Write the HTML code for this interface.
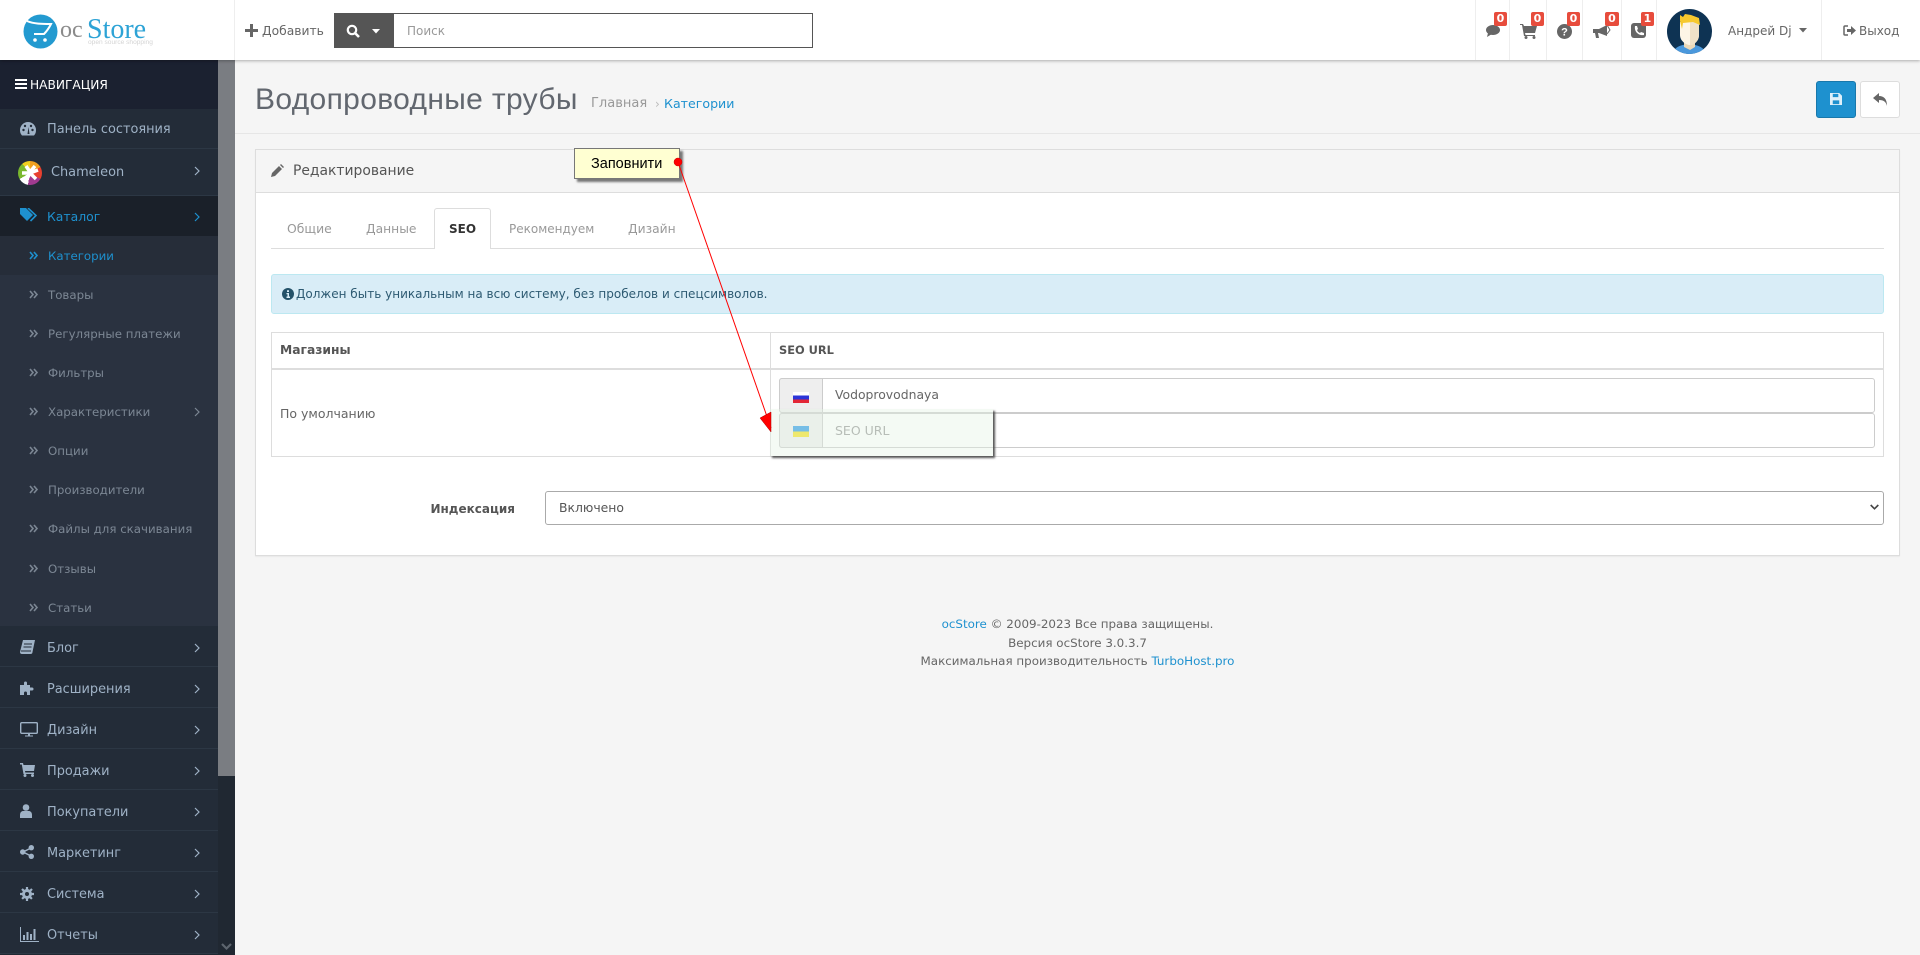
<!DOCTYPE html>
<html lang="ru"><head><meta charset="utf-8"><title>Водопроводные трубы</title>
<style>
html,body{margin:0;padding:0;width:1920px;height:955px;overflow:hidden;background:#f5f5f5;font-family:"DejaVu Sans","Liberation Sans",sans-serif;color:#666}
.a,.t,svg.i{position:absolute}
.a{box-sizing:border-box}
.t{white-space:nowrap;line-height:20px;font-size:12px}
.m{font-size:12.9px;color:#9fb2c6;left:47px}
.s{font-size:11.8px;color:#7c8794;left:48px}
.r{position:absolute;left:0;width:218px;height:41px;border-bottom:1px solid #2c3744;background:#232c38;box-sizing:border-box}
.b{position:absolute;top:12px;height:14px;background:#e74c3c;color:#fff;font-size:11px;font-weight:bold;line-height:14px;text-align:center;border-radius:2px}
.v{position:absolute;top:0;width:1px;height:60px;background:#eee}
</style></head><body>

<!-- header -->
<div class="a" style="left:0;top:0;width:1920px;height:60px;background:#fff;box-shadow:0 1px 3px rgba(0,0,0,.3);z-index:5">
 <svg class="i" style="left:22px;top:13px" width="38" height="37" viewBox="0 0 38 37"><circle cx="18.5" cy="18.5" r="17" fill="#239ad0"/><path d="M5 8c7 3 15 3 24 3-2 4-4 7-7 10H12" fill="none" stroke="#fff" stroke-width="2"/><circle cx="13" cy="27" r="1.8" fill="#fff"/><circle cx="23" cy="27" r="1.8" fill="#fff"/></svg>
 <span class="t" style="left:60px;top:17px;font:24px/26px 'Liberation Serif',serif;color:#8b8b8b">oc</span>
 <span class="t" style="left:87px;top:14px;font:28px/32px 'Liberation Serif',serif;color:#2da3d6">Store</span>
 <span class="t" style="left:88px;top:37px;font:6.6px/12px 'Liberation Sans',sans-serif;color:#d4d4d4">open source shopping</span>
 <div class="v" style="left:234px"></div>
 <svg class="i" style="left:245px;top:24px" width="13" height="13" viewBox="0 0 13 13"><path d="M5 0h3v5h5v3H8v5H5V8H0V5h5z" fill="#666"/></svg>
 <span class="t" style="left:262px;top:21px;font-size:12.3px">Добавить</span>
 <div class="a" style="left:334px;top:13px;width:60px;height:35px;background:#555"></div>
 <svg class="i" style="left:346px;top:24px" width="14" height="14" viewBox="0 0 14 14"><circle cx="6" cy="6" r="4.2" fill="none" stroke="#fff" stroke-width="2.2"/><path d="M9 9l4 4" stroke="#fff" stroke-width="2.6"/></svg>
 <svg class="i" style="left:372px;top:29px" width="9" height="5" viewBox="0 0 9 5"><path d="M0 0h8L4 4.5z" fill="#fff"/></svg>
 <div class="a" style="left:393px;top:13px;width:420px;height:35px;border:1px solid #555;background:#fff"></div>
 <span class="t" style="left:407px;top:21px;font-size:12px;color:#999">Поиск</span>

 <div class="v" style="left:1475px"></div><div class="v" style="left:1509px"></div><div class="v" style="left:1546px"></div><div class="v" style="left:1582px"></div><div class="v" style="left:1621px"></div><div class="v" style="left:1656px"></div><div class="v" style="left:1821px"></div>
 <svg class="i" style="left:1486px;top:25px" width="14" height="12" viewBox="0 0 14 12"><ellipse cx="7" cy="5" rx="7" ry="5" fill="#666"/><path d="M2 8L1 12l5-3z" fill="#666"/></svg>
 <svg class="i" style="left:1520px;top:24px" width="17" height="15" viewBox="0 0 17 15"><path d="M0 0h3l1 2h13l-2 7H5l.5 2H15v1H4L2 1H0z" fill="#666"/><circle cx="6" cy="13.5" r="1.5" fill="#666"/><circle cx="14" cy="13.5" r="1.5" fill="#666"/></svg>
 <svg class="i" style="left:1557px;top:24px" width="15" height="15" viewBox="0 0 15 15"><circle cx="7.5" cy="7.5" r="7.5" fill="#666"/><text x="7.5" y="11.5" text-anchor="middle" font-family="Liberation Sans" font-weight="bold" font-size="11" fill="#fff">?</text></svg>
 <svg class="i" style="left:1593px;top:24px" width="18" height="15" viewBox="0 0 18 15"><path d="M0 5h6l8-4v11L6 9H5l1 5H3L2 9H0z" fill="#666"/><path d="M14 1l3 5-3 4" fill="none" stroke="#666"/></svg>
 <svg class="i" style="left:1631px;top:23px" width="15" height="15" viewBox="0 0 15 15"><rect width="15" height="15" rx="3" fill="#666"/><path d="M4 3l2 0 1 3-1 1c.5 1.5 1.5 2.5 3 3l1-1 3 1v2c-5 1-10-3-9-9z" fill="#fff"/></svg>
 <div class="b" style="left:1494px;width:13px">0</div><div class="b" style="left:1531px;width:13px">0</div><div class="b" style="left:1567px;width:13px">0</div><div class="b" style="left:1605px;width:14px">0</div><div class="b" style="left:1641px;width:13px">1</div>
 <svg class="i" style="left:1667px;top:9px" width="45" height="45" viewBox="0 0 45 45"><defs><clipPath id="c"><circle cx="22.5" cy="22.5" r="22.5"/></clipPath></defs><g clip-path="url(#c)"><rect width="45" height="45" fill="#0e3353"/><path d="M6 45c1-7 7-9 16-10 9 1 15 3 17 10z" fill="#4a98dc"/><path d="M17 30h11v8l-5 3-6-3z" fill="#ecd9b8"/><path d="M13 13h19v13c0 6-5 10-9 10s-10-4-10-10z" fill="#fdf5e6"/><path d="M23 13h9v13c0 6-5 10-9 10z" fill="#f0e2c8"/><path d="M13 6l3 2 2-3 6 1 8 3 1 7-7-3-10 1-1 6-2-8z" fill="#f6c92e"/></g></svg>
 <span class="t" style="left:1728px;top:21px;font-size:12px">Андрей Dj</span>
 <svg class="i" style="left:1799px;top:28px" width="9" height="5" viewBox="0 0 9 5"><path d="M0 0h8L4 4.5z" fill="#666"/></svg>
 <svg class="i" style="left:1843px;top:25px" width="13" height="11" viewBox="0 0 13 11"><path d="M5 1H2a1 1 0 00-1 1v7a1 1 0 001 1h3" fill="none" stroke="#666" stroke-width="1.5"/><path d="M4 4h4V1l5 4.5L8 10V7H4z" fill="#666"/></svg>
 <span class="t" style="left:1859px;top:21px;font-size:12px">Выход</span>
</div>

<!-- sidebar -->
<div class="a" style="left:0;top:60px;width:235px;height:895px;background:#202832"></div>
<div class="a" style="left:218px;top:60px;width:17px;height:716px;background:#7a7d82"></div>
<svg class="i" style="left:221px;top:943px" width="11" height="8" viewBox="0 0 11 8"><path d="M1 1l4.5 4.5L10 1" fill="none" stroke="#5d656e" stroke-width="2.2"/></svg>
<div class="a" style="left:0;top:60px;width:218px;height:49px;background:#1b2130"></div>
<svg class="i" style="left:15px;top:79px" width="12" height="10" viewBox="0 0 12 10"><path d="M0 0h12v2H0zM0 4h12v2H0zM0 8h12v2H0z" fill="#fff"/></svg>
<span class="t" style="left:30px;top:75px;font-size:12.2px;color:#fff">НАВИГАЦИЯ</span>

<div class="r" style="top:109px;height:40px"></div>
<div class="r" style="top:149px;height:47px"></div>
<div class="r" style="top:196px;height:40px;background:#1a2029;border:0"></div>
<div class="a" style="left:0;top:236px;width:218px;height:39px;background:#262d39"></div>
<div class="a" style="left:0;top:275px;width:218px;height:351px;background:#2a3240"></div>
<div class="r" style="top:626px"></div><div class="r" style="top:667px"></div><div class="r" style="top:708px"></div><div class="r" style="top:749px"></div><div class="r" style="top:790px"></div><div class="r" style="top:831px"></div><div class="r" style="top:872px"></div><div class="r" style="top:913px"></div>

<span class="t m" style="top:120px">Панель состояния</span>
<span class="t m" style="left:51px;top:163px">Chameleon</span>
<span class="t m" style="top:207px;color:#1e91cf;font-size:12.4px">Каталог</span>
<span class="t s" style="top:246px;color:#1e91cf">Категории</span>
<span class="t s" style="top:285px">Товары</span>
<span class="t s" style="top:324px">Регулярные платежи</span>
<span class="t s" style="top:363px">Фильтры</span>
<span class="t s" style="top:402px">Характеристики</span>
<span class="t s" style="top:441px">Опции</span>
<span class="t s" style="top:480px">Производители</span>
<span class="t s" style="top:519px">Файлы для скачивания</span>
<span class="t s" style="top:559px">Отзывы</span>
<span class="t s" style="top:598px">Статьи</span>
<span class="t m" style="top:639px">Блог</span>
<span class="t m" style="top:680px">Расширения</span>
<span class="t m" style="top:721px">Дизайн</span>
<span class="t m" style="top:762px">Продажи</span>
<span class="t m" style="top:803px">Покупатели</span>
<span class="t m" style="top:844px">Маркетинг</span>
<span class="t m" style="top:885px">Система</span>
<span class="t m" style="top:926px">Отчеты</span>

<!-- side icons -->
<svg class="i" style="left:20px;top:122px" width="16" height="14" viewBox="0 0 16 14"><path d="M8 0a8 8 0 00-8 8c0 2 .5 4 2 5.5h12c1.500-1.500 2-3.500 2-5.500a8 8 0 00-8-8z" fill="#9fb2c6"/><circle cx="3.5" cy="8" r="1.2" fill="#232c38"/><circle cx="5" cy="4" r="1.2" fill="#232c38"/><circle cx="11" cy="4" r="1.2" fill="#232c38"/><circle cx="12.5" cy="8" r="1.2" fill="#232c38"/><path d="M7.5 12l1-7 1 7z" fill="#232c38"/></svg>
<div class="a" style="left:18px;top:161px;width:24px;height:24px;border-radius:50%;background:conic-gradient(#f0a020 0 60deg,#e8402f 60deg 120deg,#a03a90 120deg 190deg,#fff 190deg 240deg,#7ab82e 240deg 320deg,#f0d020 320deg)"></div>
<svg class="i" style="left:18px;top:161px" width="24" height="24" viewBox="0 0 24 24"><path d="M8 5l4 6 5-6M8 20l4-8 6 6M4 12l8 0 8-3" fill="none" stroke="#fff" stroke-width="3.5"/></svg>
<svg class="i" style="left:20px;top:208px" width="17" height="14" viewBox="0 0 17 14"><path d="M0 0h6l7 7-6 6-7-7z" fill="#1e91cf"/><path d="M8 0l8 7.5-5.500 5.500" fill="none" stroke="#1e91cf" stroke-width="1.6"/></svg>
<svg class="i" style="left:20px;top:640px" width="15" height="14" viewBox="0 0 15 14"><path d="M3 0h12l-2.500 12a2 2 0 01-2 2H2a2 2 0 01-2-2z" fill="#9fb2c6"/><path d="M4 4h8M3.5 7h8M1 11h10" stroke="#232c38"/></svg>
<svg class="i" style="left:20px;top:680px" width="15" height="15" viewBox="0 0 15 15"><path d="M0 5h4V3a1.500 1.500 0 013 0v2h3v2.500h2a1.500 1.500 0 010 3h-2V15H7v-2a1.500 1.500 0 00-3 0v2H0z" fill="#9fb2c6"/></svg>
<svg class="i" style="left:20px;top:722px" width="18" height="15" viewBox="0 0 18 15"><rect x=".7" y=".7" width="16.6" height="10.6" rx="1" fill="none" stroke="#9fb2c6" stroke-width="1.4"/><path d="M8 12h2v1.500h3v1H5v-1h3z" fill="#9fb2c6"/></svg>
<svg class="i" style="left:20px;top:763px" width="15" height="14" viewBox="0 0 15 14"><path d="M0 0h3l.5 2H15l-1 6H5l.3 1.500H14V11H3.500L1.800 1.500H0z" fill="#9fb2c6"/><circle cx="5" cy="12.5" r="1.5" fill="#9fb2c6"/><circle cx="12.5" cy="12.5" r="1.5" fill="#9fb2c6"/></svg>
<svg class="i" style="left:20px;top:804px" width="12" height="14" viewBox="0 0 12 14"><circle cx="6" cy="3.5" r="3.3" fill="#9fb2c6"/><path d="M0 14v-3c0-3 2-4 3-4h6c1 0 3 1 3 4v3z" fill="#9fb2c6"/></svg>
<svg class="i" style="left:20px;top:845px" width="14" height="14" viewBox="0 0 14 14"><circle cx="2.7" cy="7" r="2.7" fill="#9fb2c6"/><circle cx="11.3" cy="2.7" r="2.7" fill="#9fb2c6"/><circle cx="11.3" cy="11.3" r="2.7" fill="#9fb2c6"/><path d="M3 7l8-4M3 7l8 4" stroke="#9fb2c6" stroke-width="1.5"/></svg>
<svg class="i" style="left:20px;top:887px" width="14" height="14" viewBox="0 0 14 14"><circle cx="7" cy="7" r="3.5" fill="none" stroke="#9fb2c6" stroke-width="3"/><path d="M7 0v14M0 7h14M2 2l10 10M12 2L2 12" stroke="#9fb2c6" stroke-width="2.2" stroke-dasharray="2.5 9"/></svg>
<svg class="i" style="left:20px;top:927px" width="19" height="15" viewBox="0 0 19 15"><path d="M.5 0v14.500H19" fill="none" stroke="#9fb2c6"/><path d="M3 8h2v5H3zM6.500 5h2v8h-2zM10 7h2v6h-2zM13.500 2h2v11h-2z" fill="#9fb2c6"/></svg>
<!-- chevrons -->
<svg class="i" style="left:0;top:0;pointer-events:none" width="218" height="955" viewBox="0 0 218 955"><g fill="none" stroke="#9fb2c6" stroke-width="1.2"><path d="M195 167l4 4-4 4M195 644l4 4-4 4M195 685l4 4-4 4M195 726l4 4-4 4M195 767l4 4-4 4M195 808l4 4-4 4M195 849l4 4-4 4M195 890l4 4-4 4M195 931l4 4-4 4"/><path d="M195 213l4 4-4 4" stroke="#1e91cf"/><path d="M195 408l4 4-4 4" stroke="#7c8794"/></g><g fill="none" stroke="#7c8794" stroke-width="1.6"><path d="M30 291l3 3.500-3 3.500M34 291l3 3.500-3 3.500M30 330l3 3.500-3 3.500M34 330l3 3.500-3 3.500M30 369l3 3.500-3 3.500M34 369l3 3.500-3 3.500M30 408l3 3.500-3 3.500M34 408l3 3.500-3 3.500M30 447l3 3.500-3 3.500M34 447l3 3.500-3 3.500M30 486l3 3.500-3 3.500M34 486l3 3.500-3 3.500M30 525l3 3.500-3 3.500M34 525l3 3.500-3 3.500M30 565l3 3.500-3 3.500M34 565l3 3.500-3 3.500M30 604l3 3.500-3 3.500M34 604l3 3.500-3 3.500"/><path d="M30 252l3 3.500-3 3.500M34 252l3 3.500-3 3.500" stroke="#1e91cf"/></g></svg>

<!-- page head -->
<div class="a" style="left:235px;top:133px;width:1685px;height:1px;background:#e6e6e6"></div>
<span class="t" style="left:255px;top:80px;font:300 30px/40px 'Liberation Sans',sans-serif;color:#62676f;letter-spacing:.34px">Водопроводные трубы</span>
<span class="t" style="left:591px;top:94px;font-size:13px;color:#999">Главная</span>
<span class="t" style="left:655px;top:94px;font-size:12px;color:#bbb">›</span>
<span class="t" style="left:664px;top:94px;font-size:12.6px;color:#1e91cf">Категории</span>
<div class="a" style="left:1816px;top:81px;width:40px;height:37px;background:#1e91cf;border:1px solid #1978ab;border-radius:3px"></div>
<svg class="i" style="left:1830px;top:93px" width="12" height="12" viewBox="0 0 13 13"><path d="M0 0h10l3 3v10H0z" fill="#dff0fa"/><path d="M3 1h6v3.500H3zM3 8h7v4H3z" fill="#1e91cf"/></svg>
<div class="a" style="left:1860px;top:81px;width:40px;height:37px;background:#fff;border:1px solid #ddd;border-radius:3px"></div>
<svg class="i" style="left:1873px;top:93px" width="14" height="13" viewBox="0 0 14 13"><path d="M6 0v3c5 0 8 3 8 10-1-4-3-6-8-6v3L0 5z" fill="#666"/></svg>

<!-- panel -->
<div class="a" style="left:255px;top:149px;width:1645px;height:407px;background:#fff;border:1px solid #ddd;box-shadow:0 1px 1px rgba(0,0,0,.05)"></div>
<div class="a" style="left:256px;top:150px;width:1643px;height:43px;background:#f5f5f5;border-bottom:1px solid #ddd"></div>
<svg class="i" style="left:271px;top:164px" width="13" height="13" viewBox="0 0 13 13"><path d="M0 13l1-4 7-7 3 3-7 7zM9 1l1-1 3 3-1 1z" fill="#666"/></svg>
<span class="t" style="left:293px;top:161px;font-size:13.9px;color:#555">Редактирование</span>

<div class="a" style="left:271px;top:248px;width:1613px;height:1px;background:#ddd"></div>
<div class="a" style="left:434px;top:208px;width:57px;height:41px;background:#fff;border:1px solid #ddd;border-bottom:0;border-radius:3px 3px 0 0"></div>
<span class="t" style="left:287px;top:219px;font-size:12.4px;color:#999">Общие</span>
<span class="t" style="left:366px;top:219px;font-size:12.3px;color:#999">Данные</span>
<span class="t" style="left:449px;top:219px;font-size:12px;color:#333;font-weight:bold">SEO</span>
<span class="t" style="left:509px;top:219px;font-size:12px;color:#999">Рекомендуем</span>
<span class="t" style="left:628px;top:219px;font-size:12.3px;color:#999">Дизайн</span>

<div class="a" style="left:271px;top:274px;width:1613px;height:40px;background:#d9edf7;border:1px solid #bce8f1;border-radius:3px"></div>
<svg class="i" style="left:282px;top:288px" width="12" height="12" viewBox="0 0 12 12"><circle cx="6" cy="6" r="6" fill="#245269"/><path d="M5 2.200h2v1.800H5zM4.500 5H7v3.500h1V10H4.500V8.500h1V6.200h-1z" fill="#d9edf7"/></svg>
<span class="t" style="left:296px;top:284px;font-size:12.03px;color:#2d5a72">Должен быть уникальным на всю систему, без пробелов и спецсимволов.</span>

<!-- table -->
<div class="a" style="left:271px;top:332px;width:1613px;height:125px;border:1px solid #ddd"></div>
<div class="a" style="left:272px;top:368px;width:1611px;height:2px;background:#ddd"></div>
<div class="a" style="left:770px;top:333px;width:1px;height:123px;background:#ddd"></div>
<span class="t" style="left:280px;top:340px;font-size:12.3px;font-weight:bold;color:#555">Магазины</span>
<span class="t" style="left:779px;top:340px;font-size:11.4px;font-weight:bold;color:#555">SEO URL</span>
<span class="t" style="left:280px;top:404px;font-size:12.5px">По умолчанию</span>

<div class="a" style="left:779px;top:378px;width:1096px;height:35px;background:#fff;border:1px solid #ccc;border-radius:3px"></div>
<div class="a" style="left:779px;top:378px;width:44px;height:35px;background:#eee;border:1px solid #ccc;border-radius:3px 0 0 3px"></div>
<div class="a" style="left:793px;top:392px;width:16px;height:11px;background:linear-gradient(#fff 0 33%,#2b35d8 33% 66%,#e32636 66%)"></div>
<span class="t" style="left:835px;top:385px;font-size:12.4px">Vodoprovodnaya</span>
<div class="a" style="left:779px;top:413px;width:1096px;height:35px;background:#fff;border:1px solid #ccc;border-radius:3px"></div>
<div class="a" style="left:779px;top:413px;width:44px;height:35px;background:#eee;border:1px solid #ccc;border-radius:3px 0 0 3px"></div>
<div class="a" style="left:793px;top:426px;width:16px;height:11px;background:linear-gradient(#2d9be8 0 50%,#f5e11e 50%)"></div>
<span class="t" style="left:835px;top:421px;font-size:12.5px;color:#999">SEO URL</span>
<div class="a" style="left:770px;top:409px;width:223px;height:47px;background:rgba(228,243,228,.4);box-shadow:2px 2px 2px #555"></div>

<span class="t" style="right:1405px;top:499px;font-size:12px;font-weight:bold;color:#555">Индексация</span>
<div class="a" style="left:545px;top:491px;width:1339px;height:34px;background:#fff;border:1px solid #aaa;border-radius:3px"></div>
<span class="t" style="left:559px;top:498px;font-size:12.4px;color:#555">Включено</span>
<svg class="i" style="left:1870px;top:504px" width="9" height="7" viewBox="0 0 9 7"><path d="M.7 1l3.800 3.800L8.300 1" fill="none" stroke="#444" stroke-width="1.6"/></svg>

<!-- footer -->
<div class="t" style="left:235px;width:1685px;top:615px;text-align:center;font-size:11.9px;line-height:18.5px;white-space:normal"><span style="color:#1e91cf">ocStore</span> © 2009-2023 Все права защищены.<br>Версия ocStore 3.0.3.7<br>Максимальная производительность <span style="color:#1e91cf">TurboHost.pro</span></div>

<!-- overlay button + arrow -->
<div class="a" style="left:574px;top:148px;width:106px;height:31px;background:#ffffd2;border:1px solid #777;box-shadow:3px 3px 2px #777"></div>
<span class="t" style="left:591px;top:154px;font:14.5px/20px 'Liberation Sans',sans-serif;color:#000">Заповнити</span>
<svg class="i" style="left:0;top:0;z-index:6" width="1920" height="955" viewBox="0 0 1920 955"><path d="M678 162L771 428" stroke="#f00" stroke-width="1" fill="none"/><path d="M760 418l11-6v20z" fill="#f00" stroke="#a00" stroke-width=".5"/><circle cx="678" cy="162" r="4" fill="#f00" stroke="#c00" stroke-width=".5"/></svg>
</body></html>
